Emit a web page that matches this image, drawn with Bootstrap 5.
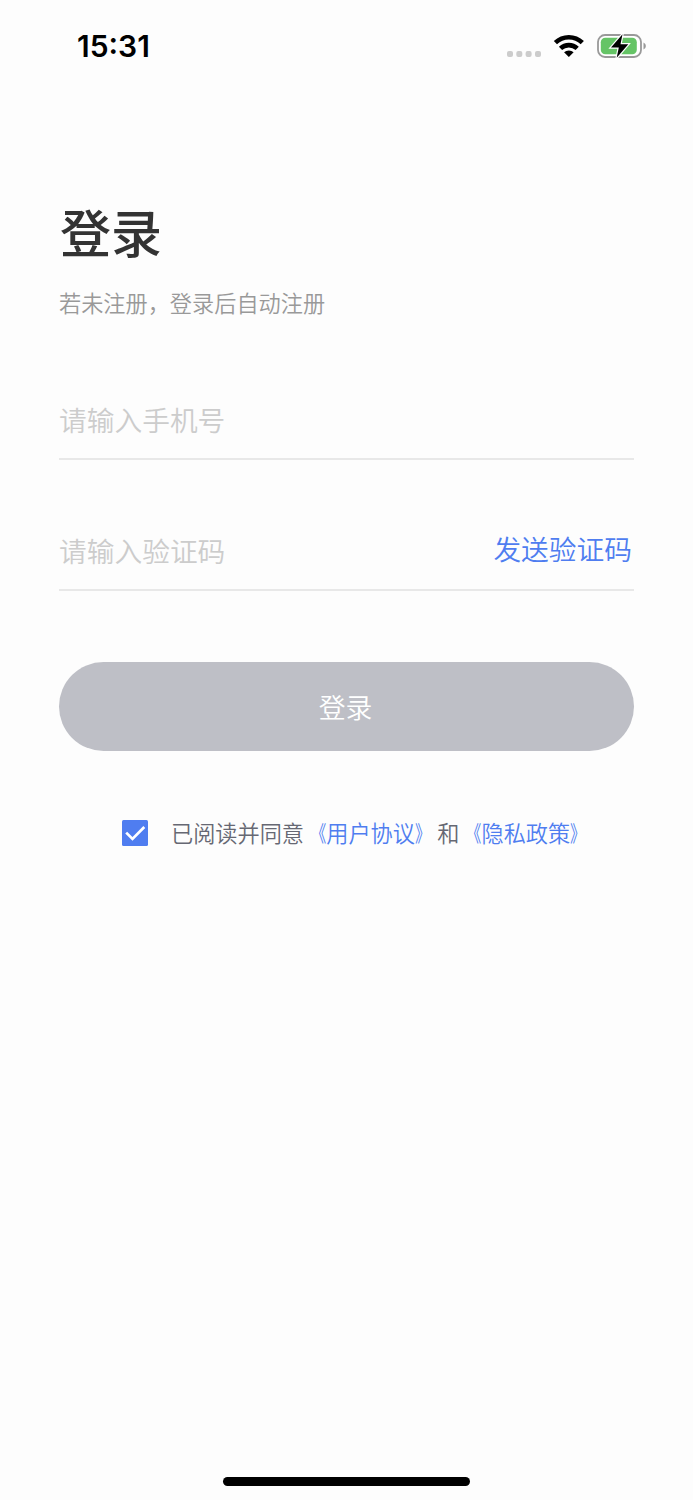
<!DOCTYPE html>
<html lang="zh-CN">
<head>
<meta charset="utf-8">
<meta name="viewport" content="width=device-width, initial-scale=1">
<title>登录</title>
<link href="https://cdn.jsdelivr.net/npm/bootstrap@5.3.0/dist/css/bootstrap.min.css" rel="stylesheet">
<style>
  body { font-family: "Noto Sans CJK SC", sans-serif; font-weight: 350; background: #fdfdfd; color: #333; }
  .screen { height: 1500px; }
  .status-bar { height: 92px; padding: 0 46px 0 77px; }
  .clock { font: 600 30px/92px Inter, sans-serif; color: #000; }
  .signal-dots { margin-top: 15px; }
  .wifi { margin-right: 7px; }
  .login-main { padding: 100px 59px 0; }
  .title { font-size: 51px; line-height: 78px; font-weight: 500; color: #333; padding-left: 1px; }
  .subtitle { font-size: 22.18px; line-height: 32px; margin-top: 16px; color: #999; }
  .field { height: 82px; border-bottom: 2px solid #e8e8e8; }
  .field .form-control { font-size: 27.72px; line-height: 42px; color: #333; height: 42px; font-weight: 350; margin-top: 1px; }
  .field .form-control::placeholder { color: #ccc; opacity: 1; }
  .field-phone { margin-top: 60px; }
  .field-code { margin-top: 49px; }
  .send-code { font-size: 27.72px; line-height: 42px; font-weight: 350; color: #4f7df0; margin: 0 2px 3px 0; }
  .submit { height: 89px; margin-top: 71px; padding: 2px 2px 0 0; background: #bebfc6; font-size: 26.8px; font-weight: 350; }
  .agreement { margin-top: 65px; padding-left: 63px; font-size: 22.18px; line-height: 32px; color: #666873; }
  .agreement p { margin-bottom: 2px; }
  .agreement a { color: #4f7df0; }
  .quote-open, .quote-close { display: inline-block; transform: scaleX(.7); transform-origin: right; }
  .quote-close { transform-origin: left; }
  .tick { width: 26px; height: 26px; margin-right: 23px; }
  .home-bar { width: 247px; height: 9px; margin-bottom: 14px; background: #000; }
</style>
</head>
<body>
<div class="screen d-flex flex-column overflow-hidden">
  <header class="status-bar d-flex justify-content-between align-items-center">
    <span class="clock">15:31</span>
    <div class="d-flex align-items-center">
      <svg class="signal-dots" width="36" height="8" viewBox="0 0 36 8" fill="#ccc">
        <rect x="1" y="1" width="6" height="6" rx="2"/><rect x="10.3" y="1" width="6" height="6" rx="2"/><rect x="19.6" y="1" width="6" height="6" rx="2"/><rect x="29" y="1" width="6" height="6" rx="2"/>
      </svg>
      <svg class="wifi ms-2" width="40" height="24" viewBox="0 0 40 24">
        <g fill="none" stroke="#000" stroke-width="4.6">
          <path d="M5.4 8.6a19.4 19.4 0 0 1 26.9 0"/>
          <path d="M10.5 14.4a12.2 12.2 0 0 1 16.7 0"/>
        </g>
        <path d="M18.85 23l-4.8-4.7a7 7 0 0 1 9.6 0z"/>
      </svg>
      <svg width="50" height="28" viewBox="0 0 50 28">
        <rect x="1" y="3" width="43" height="22" rx="7" fill="#fff" stroke="#999" stroke-width="1.8"/>
        <rect x="3.8" y="5.8" width="36" height="16.4" rx="4.5" fill="#65c466"/>
        <path d="M46.5 10.5q2.4 1 2.4 3.5t-2.4 3.5z" fill="#999"/>
        <path d="M25.5 2.2L14 15.6h7.8L19.7 25.8 31.3 12.3h-7.8z" fill="#000" stroke="#fff" stroke-width="2.4" paint-order="stroke"/>
      </svg>
    </div>
  </header>
  <main class="login-main">
    <h1 class="title mb-0">登录</h1>
    <p class="subtitle mb-0">若未注册，登录后自动注册</p>
    <form>
      <div class="field field-phone d-flex align-items-center">
        <input class="form-control border-0 bg-transparent p-0 shadow-none" type="tel" placeholder="请输入手机号" aria-label="手机号">
      </div>
      <div class="field field-code d-flex align-items-center">
        <input class="form-control border-0 bg-transparent p-0 shadow-none" type="text" placeholder="请输入验证码" aria-label="验证码">
        <button class="send-code btn border-0 p-0 text-nowrap" type="button">发送验证码</button>
      </div>
      <button class="submit btn w-100 border-0 rounded-pill text-white" type="button">登录</button>
      <div class="agreement d-flex align-items-center text-nowrap">
        <svg class="tick flex-shrink-0" viewBox="0 0 26 26" role="img" aria-label="已同意">
          <rect width="26" height="26" rx="1.5" fill="#4f7df0"/>
          <path d="M4.2 12.6l6.3 6.3L22.3 7" fill="none" stroke="#fff" stroke-width="2.7"/>
        </svg>
        <p>已阅读并同意<a class="text-decoration-none" href="#"><span class="quote-open">《</span>用户协议<span class="quote-close">》</span></a>和<a class="text-decoration-none" href="#"><span class="quote-open">《</span>隐私政策<span class="quote-close">》</span></a></p>
      </div>
    </form>
  </main>
  <div class="home-bar rounded-pill mx-auto mt-auto"></div>
</div>
<script src="https://cdn.jsdelivr.net/npm/bootstrap@5.3.0/dist/js/bootstrap.bundle.min.js"></script>
</body>
</html>
